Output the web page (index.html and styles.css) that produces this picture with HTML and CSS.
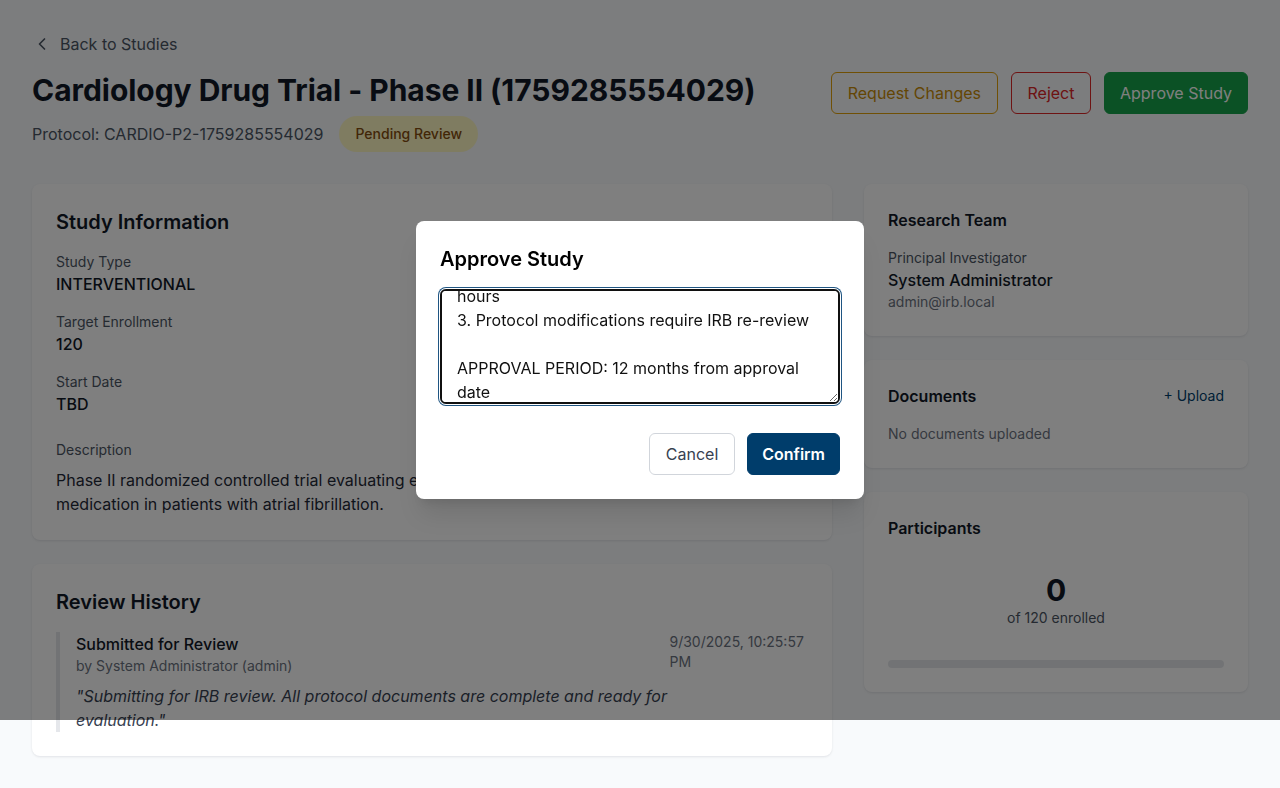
FILE: index.html
```html
<!DOCTYPE html>
<html lang="en">
<head>
<meta charset="utf-8">
<title>Cardiology Drug Trial - Phase II</title>
<link rel="stylesheet" href="styles.css">
</head>
<body>
<div class="page">
  <a class="back-link" href="#">
    <svg class="back-icon" viewBox="0 0 24 24" width="20" height="20" fill="none" stroke="currentColor" stroke-width="2" stroke-linecap="round" stroke-linejoin="round"><path d="m15 18-6-6 6-6"/></svg>
    <span>Back to Studies</span>
  </a>

  <header class="study-header">
    <div class="study-heading">
      <h1 class="study-title">Cardiology Drug Trial - Phase II (1759285554029)</h1>
      <div class="protocol-row">
        <span class="protocol">Protocol: CARDIO-P2-1759285554029</span>
        <span class="badge badge-pending">Pending Review</span>
      </div>
    </div>
    <div class="header-actions">
      <button class="btn btn-outline-warning" type="button">Request Changes</button>
      <button class="btn btn-outline-danger" type="button">Reject</button>
      <button class="btn btn-success" type="button">Approve Study</button>
    </div>
  </header>

  <div class="layout">
    <div class="main-col">
      <section class="card">
        <h2 class="card-title">Study Information</h2>
        <div class="info-grid">
          <div class="field">
            <div class="field-label">Study Type</div>
            <div class="field-value">INTERVENTIONAL</div>
          </div>
          <div class="field">
            <div class="field-label">Target Enrollment</div>
            <div class="field-value">120</div>
          </div>
          <div class="field">
            <div class="field-label">Start Date</div>
            <div class="field-value">TBD</div>
          </div>
        </div>
        <div class="description">
          <div class="field-label">Description</div>
          <p class="description-text">Phase II randomized controlled trial evaluating efficacy and safety of a novel anticoagulant medication in patients with atrial fibrillation.</p>
        </div>
      </section>

      <section class="card">
        <h2 class="card-title">Review History</h2>
        <div class="history-entry">
          <div class="history-main">
            <div class="history-action">Submitted for Review</div>
            <div class="history-by">by System Administrator (admin)</div>
            <p class="history-comment">"Submitting for IRB review. All protocol documents are complete and ready for evaluation."</p>
          </div>
          <div class="history-time">9/30/2025, 10:25:57 PM</div>
        </div>
      </section>
    </div>

    <aside class="side-col">
      <section class="card">
        <h3 class="side-title">Research Team</h3>
        <div class="field-label">Principal Investigator</div>
        <div class="field-value">System Administrator</div>
        <div class="field-sub">admin@irb.local</div>
      </section>

      <section class="card">
        <div class="side-head">
          <h3 class="side-title side-title-inline">Documents</h3>
          <a class="upload-link" href="#">+ Upload</a>
        </div>
        <div class="empty-text">No documents uploaded</div>
      </section>

      <section class="card">
        <h3 class="side-title">Participants</h3>
        <div class="enroll">
          <div class="enroll-count">0</div>
          <div class="enroll-of">of 120 enrolled</div>
        </div>
        <div class="progress"><div class="progress-fill" style="width: 0%"></div></div>
      </section>
    </aside>
  </div>
</div>

<div class="overlay">
  <div class="modal" role="dialog" aria-labelledby="modal-title">
    <h2 class="modal-title" id="modal-title">Approve Study</h2>
    <textarea class="modal-textarea" rows="4">APPROVED with the following conditions:

1. Annual progress reports required
2. Adverse events must be reported within 24 hours
3. Protocol modifications require IRB re-review

APPROVAL PERIOD: 12 months from approval date</textarea>
    <div class="modal-actions">
      <button class="btn btn-secondary" type="button">Cancel</button>
      <button class="btn btn-primary" type="button">Confirm</button>
    </div>
  </div>
</div>
<script src="script.js"></script>
</body>
</html>
```

FILE: styles.css
```css
* { box-sizing: border-box; }

html, body {
  margin: 0;
  padding: 0;
}

body {
  font-family: Inter, "Noto Sans", "Liberation Sans", sans-serif;
  font-size: 16px;
  line-height: 24px;
  color: #111827;
  background: #f8fafc;
  position: relative;
}

h1, h2, h3, p { margin: 0; }

.page {
  padding: 32px 32px 32px;
}

.back-link {
  display: inline-flex;
  align-items: center;
  gap: 8px;
  color: #4b5563;
  text-decoration: none;
  font-size: 16px;
  line-height: 24px;
  margin-bottom: 16px;
}

.back-icon { display: block; }

.study-header {
  display: flex;
  justify-content: space-between;
  align-items: flex-start;
  margin-bottom: 32px;
}

.study-title {
  font-size: 30px;
  line-height: 36px;
  font-weight: 700;
  letter-spacing: -0.05px;
  color: #111827;
}

.protocol-row {
  display: flex;
  align-items: center;
  gap: 16px;
  margin-top: 8px;
}

.protocol {
  color: #4b5563;
  font-size: 16px;
}

.badge {
  display: inline-block;
  padding: 8px 16px;
  border-radius: 9999px;
  font-size: 14px;
  line-height: 20px;
  font-weight: 500;
}

.badge-pending {
  background: #fef9c3;
  color: #854d0e;
}

.header-actions {
  display: flex;
  gap: 13px;
}

.btn {
  font-family: inherit;
  font-size: 16px;
  line-height: 24px;
  padding: 8px 16px;
  border-radius: 6px;
  border: 1px solid transparent;
  background: #fff;
  cursor: pointer;
}

.btn-outline-warning {
  background: transparent;
  border-color: #e0a00a;
  color: #c88c08;
}

.btn-outline-danger {
  background: transparent;
  border-color: #dc2626;
  color: #dc2626;
  padding: 8px 15.5px;
}

.btn-success {
  background: #16a34a;
  border-color: #16a34a;
  color: #fff;
  padding: 8px 15px;
}

.btn-secondary {
  background: #fff;
  border-color: #d1d5db;
  color: #374151;
}

.btn-primary {
  background: #003d6b;
  border-color: #003d6b;
  color: #fff;
  font-weight: 600;
  padding: 8px 14px;
}

.layout {
  display: grid;
  grid-template-columns: repeat(3, minmax(0, 1fr));
  gap: 32px;
  align-items: start;
}

.main-col {
  grid-column: span 2;
  display: flex;
  flex-direction: column;
  gap: 24px;
}

.side-col {
  display: flex;
  flex-direction: column;
  gap: 24px;
}

.card {
  background: #fff;
  border-radius: 8px;
  padding: 24px;
  box-shadow: 0 1px 3px rgba(15, 23, 42, 0.06), 0 1px 2px rgba(15, 23, 42, 0.04);
}

.card-title {
  font-size: 20px;
  line-height: 28px;
  font-weight: 600;
  color: #111827;
  margin-bottom: 16px;
}

.info-grid {
  display: grid;
  grid-template-columns: minmax(0, 1fr);
  gap: 16px;
}

.field-label {
  font-size: 14px;
  line-height: 20px;
  color: #4b5563;
}

.field-value {
  font-size: 16px;
  line-height: 24px;
  font-weight: 500;
  color: #111827;
}

.field-sub {
  font-size: 14px;
  line-height: 20px;
  color: #6b7280;
}

.description {
  margin-top: 24px;
}

.description-text {
  margin-top: 8px;
  color: #1f2937;
}

.history-entry {
  display: flex;
  justify-content: space-between;
  border-left: 4px solid #e5e7eb;
  padding-left: 16px;
}

.history-action {
  font-weight: 500;
  color: #111827;
}

.history-by {
  font-size: 14px;
  line-height: 20px;
  color: #6b7280;
}

.history-comment {
  margin-top: 8px;
  font-style: italic;
  color: #374151;
}

.history-time {
  font-size: 14px;
  line-height: 20px;
  color: #6b7280;
}

.side-title {
  font-size: 16px;
  line-height: 24px;
  font-weight: 600;
  color: #111827;
  margin-bottom: 16px;
}

.side-head {
  display: flex;
  justify-content: space-between;
  align-items: center;
  margin-bottom: 16px;
}

.side-title-inline { margin-bottom: 0; }

.upload-link {
  font-size: 14px;
  line-height: 20px;
  color: #003d6b;
  text-decoration: none;
}

.empty-text {
  font-size: 14px;
  line-height: 20px;
  color: #6b7280;
}

.enroll {
  text-align: center;
  padding: 16px 0;
}

.enroll-count {
  font-size: 30px;
  line-height: 36px;
  font-weight: 700;
  color: #111827;
}

.enroll-of {
  font-size: 14px;
  line-height: 20px;
  color: #4b5563;
}

.progress {
  margin-top: 16px;
  height: 8px;
  border-radius: 9999px;
  background: #e5e7eb;
  overflow: hidden;
}

.progress-fill {
  height: 100%;
  background: #003d6b;
}

.overlay {
  position: absolute;
  top: 0;
  left: 0;
  width: 100%;
  height: 720px;
  background: rgba(0, 0, 0, 0.5);
  display: flex;
  align-items: center;
  justify-content: center;
}

.modal {
  width: 448px;
  background: #fff;
  border-radius: 8px;
  padding: 24px;
  box-shadow: 0 20px 25px -5px rgba(0, 0, 0, 0.1), 0 8px 10px -6px rgba(0, 0, 0, 0.1);
}

.modal-title {
  font-size: 20px;
  line-height: 28px;
  font-weight: 600;
  color: #000;
  margin-bottom: 16px;
}

.modal-textarea {
  display: block;
  width: 100%;
  height: 115px;
  font-family: inherit;
  font-size: 16px;
  line-height: 24px;
  color: #111;
  padding: 8px 15px;
  border: 2px solid #101010;
  border-radius: 6px;
  box-shadow: 0 0 0 1px #fff, 0 0 0 2px #1f5582;
  outline: none;
  scrollbar-width: none;
  resize: vertical;
}

.modal-actions {
  display: flex;
  justify-content: flex-end;
  gap: 12px;
  margin-top: 29px;
}
```

FILE: script.js
```js
var ta = document.querySelector('.modal-textarea');
if (ta) {
  ta.scrollTop = ta.scrollHeight - ta.clientHeight - 10;
}
```
